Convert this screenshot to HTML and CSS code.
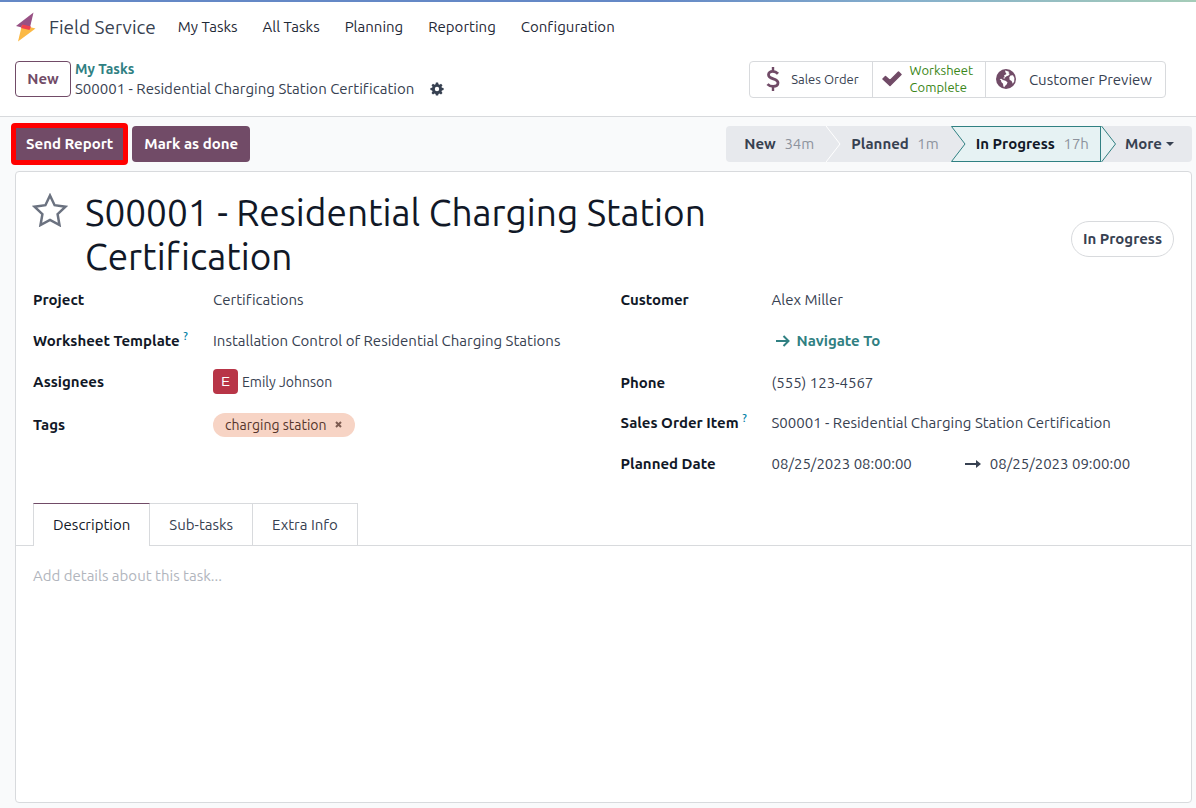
FILE: index.html
```html
<!DOCTYPE html>
<html lang="en">
<head>
<meta charset="utf-8">
<meta name="viewport" content="width=device-width, initial-scale=1">
<title>Field Service</title>
<link rel="stylesheet" href="styles.css">
</head>
<body>
<div class="strip"></div>
<header class="top">
  <nav class="navbar">
    <a class="brand" href="#">
      <svg class="logo" viewBox="0 0 20 30" aria-hidden="true">
        <path d="M17.500 .5 0 14 13.500 17.500Z" fill="#985184"/>
        <path d="M2 29.500 6 13 19.500 16.500Z" fill="#fbb945"/>
        <path d="M6.500 12.500 15 14.500 13.500 18 5 16Z" fill="#f0414f"/>
      </svg>
      <span>Field Service</span>
    </a>
    <a href="#">My Tasks</a>
    <a href="#">All Tasks</a>
    <a href="#">Planning</a>
    <a href="#">Reporting</a>
    <a href="#">Configuration</a>
  </nav>
  <div class="control">
    <button class="btn-new" type="button">New</button>
    <div class="crumbs">
      <a href="#">My Tasks</a>
      <div class="current">
        <span>S00001 - Residential Charging Station Certification</span>
        <button class="gear" type="button" aria-label="Actions">
          <svg viewBox="0 0 14 14" width="14" height="14"><path fill="#374151" fill-rule="evenodd" d="M5.900 .5h2.200l.4 1.800 1 .4 1.500-1 1.500 1.500-1 1.500.4 1 1.700.3v2.100l-1.700.4-.4 1 1 1.500-1.500 1.500-1.500-1-1 .4-.4 1.700H5.900l-.4-1.700-1-.4-1.500 1L1.500 11l1-1.500-.4-1-1.700-.4V6l1.700-.3.4-1-1-1.500L3 1.700l1.500 1 1-.4zM7 4.800a2.200 2.200 0 1 0 0 4.400 2.200 2.200 0 0 0 0-4.400z"/></svg>
        </button>
      </div>
    </div>
    <div class="stats">
      <button class="stat stat-sales" type="button">
        <svg width="14" height="24" viewBox="0 0 14 24" fill="none" stroke="#714b67" aria-hidden="true"><path d="M7 0v5M7 19v5" stroke-width="2.400"/><path d="M12 6.800C10.500 5.200 8.800 4.400 6.800 4.400 4.200 4.400 2.500 5.700 2.500 7.800c0 5 9.500 3.200 9.500 8 0 2.200-1.900 3.600-4.800 3.600-2.400 0-4.400-.9-5.700-2.300" stroke-width="2.800"/></svg>
        <span>Sales Order</span>
      </button>
      <button class="stat stat-sheet" type="button">
        <svg width="20" height="16" viewBox="0 0 20 16" aria-hidden="true"><path d="M1 8 3.500 5.500 8 9.500 16.500 1 19 3.500 8 14.500z" fill="#714b67" stroke="#714b67" stroke-width="1.500" stroke-linejoin="round"/></svg>
        <span>Worksheet<br>Complete</span>
      </button>
      <button class="stat stat-preview" type="button">
        <svg width="20" height="20" viewBox="0 0 20 20" aria-hidden="true"><circle cx="10" cy="10" r="10" fill="#714b67"/><path fill="#fff" d="M9 1.600 11 2 13.500 3 12.300 4 13.800 5 12.500 6.500 10.500 7.200 9 8.500 8 8.200 7 9.200 9.200 9.500 8 6.500 10.500 5 9.500 3.500z"/><path fill="#fff" d="M5.200 9.800 7 11 9.500 11.800 11.500 13.300 10.800 15.300 9 17 8.300 18.300 7.400 17.500 7 14.800 5.300 13 5 11.300 3.600 10.200zM14.500 6.500 17 6.200 18.400 9 18.200 12.500 16.800 14.800 15.600 12 13.600 10.700 13.300 8.200z"/></svg>
        <span>Customer Preview</span>
      </button>
    </div>
  </div>
</header>
<main class="page">
  <div class="actions">
    <span class="highlight"><button class="btn-main" type="button">Send Report</button></span>
    <button class="btn-main" type="button">Mark as done</button>
    <div class="status">
      <button class="stage first" type="button">New <small>34m</small></button>
      <svg class="chev" viewBox="0 0 15 36" aria-hidden="true"><path d="M0 0 14 18 0 36" fill="none" stroke="#fff"/></svg>
      <button class="stage" type="button">Planned <small>1m</small></button>
      <svg class="chev" viewBox="0 0 15 36" aria-hidden="true"><path d="M0 0H15V36H0L14 18z" fill="#e6f2f3"/><path d="M15 .5H.5L14 18 .5 35.500H15" fill="none" stroke="#308082"/></svg>
      <button class="stage active" type="button">In Progress <small>17h</small></button>
      <svg class="chev" viewBox="0 0 15 36" aria-hidden="true"><path d="M0 0 14 18 0 36z" fill="#e6f2f3"/><path d="M.5 0 14.500 18 .5 36" fill="none" stroke="#308082"/></svg>
      <button class="stage more" type="button">More <i class="caret"></i></button>
    </div>
  </div>
  <section class="sheet">
    <div class="head">
      <button class="star" type="button" aria-label="Priority"><svg width="36" height="34" viewBox="0 0 36 34"><path d="M18 2.500 22.600 12.200 33.500 13.700 25.600 21.200 27.500 32 18 26.800 8.500 32 10.400 21.200 2.500 13.700 13.400 12.200z" fill="none" stroke="#6b7280" stroke-width="2.500"/></svg></button>
      <h1>S00001 - Residential Charging Station Certification</h1>
      <button class="pill" type="button">In Progress</button>
    </div>
    <div class="groups">
      <dl class="fields left">
        <dt>Project</dt><dd>Certifications</dd>
        <dt>Worksheet Template <sup>?</sup></dt><dd>Installation Control of Residential Charging Stations</dd>
        <dt>Assignees</dt><dd class="person"><span class="avatar">E</span>Emily Johnson</dd>
        <dt class="tall">Tags</dt><dd class="tall"><span class="tag">charging station <button type="button" aria-label="Remove tag"><svg width="7" height="7" viewBox="0 0 7 7"><path d="M1 1l5 5M6 1 1 6" stroke="#7d5b50" stroke-width="2"/></svg></button></span></dd>
      </dl>
      <dl class="fields right">
        <dt>Customer</dt><dd>Alex Miller</dd>
        <dt></dt><dd><a class="navigate" href="#"><svg width="14" height="12" viewBox="0 0 14 12" fill="none" stroke="#308082" stroke-width="2"><path d="M0 6h12M7.500 1l5 5-5 5"/></svg>Navigate To</a></dd>
        <dt class="tall">Phone</dt><dd class="tall">(555) 123-4567</dd>
        <dt>Sales Order Item <sup>?</sup></dt><dd>S00001 - Residential Charging Station Certification</dd>
        <dt>Planned Date</dt><dd class="dates"><span>08/25/2023 08:00:00</span><svg width="16" height="8" viewBox="0 0 16 8"><path d="M0 3h11V0l5 4-5 4V5H0z" fill="#374151"/></svg><span>08/25/2023 09:00:00</span></dd>
      </dl>
    </div>
    <div class="tabs" role="tablist">
      <button class="tab on" role="tab" aria-selected="true" type="button">Description</button>
      <button class="tab" role="tab" type="button">Sub-tasks</button>
      <button class="tab" role="tab" type="button">Extra Info</button>
    </div>
    <textarea class="notes" aria-label="Description" placeholder="Add details about this task..."></textarea>
  </section>
</main>
</body>
</html>
```
FILE: styles.css
```css
* { box-sizing: border-box; }
body {
  margin: 0;
  min-height: 100vh;
  display: flex;
  flex-direction: column;
  background: #f9fafb;
  color: #374151;
  font: 15px/20px Ubuntu, "Noto Sans", sans-serif;
  font-variant-ligatures: none;
}
button { font: inherit; font-variant-ligatures: none; color: inherit; background: none; border: 0; padding: 0; }
a { color: inherit; text-decoration: none; }
svg { flex: none; }
.strip { height: 2px; background: linear-gradient(90deg, #6488c6 55%, #86b0cc 76%, #a5ccb8); }
.top { background: #fff; border-bottom: 1px solid #d8dadd; height: 115px; }
.navbar { display: flex; align-items: center; gap: 25px; height: 50px; padding-left: 16px; color: #1f2937; white-space: nowrap; }
.brand { display: flex; align-items: center; gap: 13px; margin-right: -3px; font-size: 19px; color: #374151; }
.logo { width: 20px; height: 30px; }
.control { display: flex; align-items: center; gap: 4px; padding: 7px 30px 0 15px; }
.btn-new { height: 36px; width: 56px; border: 1px solid #714b67; border-radius: 4px; color: #714b67; font-weight: 600; }
.crumbs { white-space: nowrap; }
.crumbs a { color: #308082; font-weight: 600; font-size: 14px; }
.current { display: flex; align-items: center; gap: 16px; }
.gear { display: flex; }
.stats { display: flex; margin-left: auto; border: 1px solid #d8dadd; border-radius: 4px; height: 37px; }
.stat { display: flex; align-items: center; text-align: left; white-space: nowrap; font-size: 13px; line-height: 17px; }
.stat + .stat { border-left: 1px solid #d8dadd; }
.stat-sales { gap: 11px; padding: 0 13px 0 16px; }
.stat-sheet { gap: 8px; padding: 0 12px 0 9px; color: #3a8617; }
.stat-preview { gap: 13px; padding: 0 13px 0 10px; font-size: 15px; }
.page { flex: 1; display: flex; flex-direction: column; padding: 6px 4px 5px 11px; }
.actions { display: flex; align-items: center; gap: 4px; height: 42px; }
.highlight { border: 5px solid #f00; border-radius: 4px; background: #714b67; }
.btn-main { height: 36px; padding: 0 12px; border-radius: 4px; background: #714b67; color: #fff; font-weight: 600; white-space: nowrap; }
.highlight .btn-main { height: 32px; padding: 0 10px; border-radius: 0; display: block; }
.status { display: flex; margin-left: auto; height: 36px; border-radius: 4px; background: #e7e9ed; white-space: nowrap; }
.stage { font-weight: 600; padding: 0 12px 0 10px; }
.stage small { font-size: 15px; font-weight: 400; color: #8d939d; margin-left: 5px; }
.first { padding-left: 18px; }
.active { background: #e6f2f3; color: #111827; border: 1px solid #308082; border-left: 0; padding-right: 11px; }
.chev { width: 15px; height: 36px; }
.more { display: flex; align-items: center; gap: 4px; padding: 0 18px 0 9px; }
.caret { border: 4px solid transparent; border-top-color: currentColor; border-bottom: 0; }
.sheet { flex: 1; display: flex; flex-direction: column; margin: 6px 0 0 4px; border: 1px solid #d8dadd; border-radius: 4px; background: #fff; }
.head { display: flex; align-items: center; padding: 19px 17px 0; }
.star { align-self: flex-start; display: flex; margin: 2px 17px 0 -1px; }
h1 { margin: 0; max-width: 60%; color: #111827; font-weight: 400; font-size: 37px; line-height: 44px; }
.pill { margin: 8px 0 0 auto; height: 36px; padding: 0 11px; border: 1px solid #d8dadd; border-radius: 18px; font-weight: 600; }
.groups { display: grid; grid-template-columns: 1fr 1fr; padding: 0 17px; gap: 34px; }
.fields { display: grid; align-content: start; margin: 0; grid-auto-rows: minmax(41px, auto); align-items: center; }
.left { grid-template-columns: 180px 1fr; }
.right { grid-template-columns: 151px 1fr; }
dt { color: #111827; font-weight: 600; white-space: nowrap; }
dd { margin: 0; white-space: nowrap; }
sup { font-size: 11px; font-weight: 500; line-height: 0; color: #0180a5; }
.person { display: flex; align-items: center; gap: 4px; font-size: 14px; }
.avatar { display: grid; place-items: center; width: 25px; height: 25px; border-radius: 4px; background: #b83547; color: #fff; font: 13px "Liberation Sans", sans-serif; }
.tall { padding: 3px 0 1px; }
.left .tall { padding: 4px 0 0; }
.tag { display: inline-flex; align-items: center; gap: 8px; height: 24px; padding: 0 13px 0 12px; border-radius: 12px; background: #f7d4c5; color: #55352b; font-size: 14px; }
.tag button { display: flex; }
.navigate { display: flex; align-items: center; gap: 7px; padding-left: 4px; color: #308082; font-weight: 600; }
.dates { display: flex; align-items: center; }
.dates svg { margin: 0 9px 0 53px; }
.tabs { display: flex; margin-top: 19px; padding-left: 17px; border-bottom: 1px solid #d8dadd; }
.tab { height: 42px; padding: 0 19px; border: 1px solid #d8dadd; border-width: 1px 1px 0 0; }
.on { height: 43px; margin-bottom: -1px; border-left-width: 1px; border-top-color: #714b67; background: #fff; color: #111827; }
.notes { flex: 1; width: 100%; padding: 20px 17px; border: 0; outline: 0; resize: none; background: none; font: inherit; color: inherit; }
.notes::placeholder { color: #b1b5bd; opacity: 1; }
```
